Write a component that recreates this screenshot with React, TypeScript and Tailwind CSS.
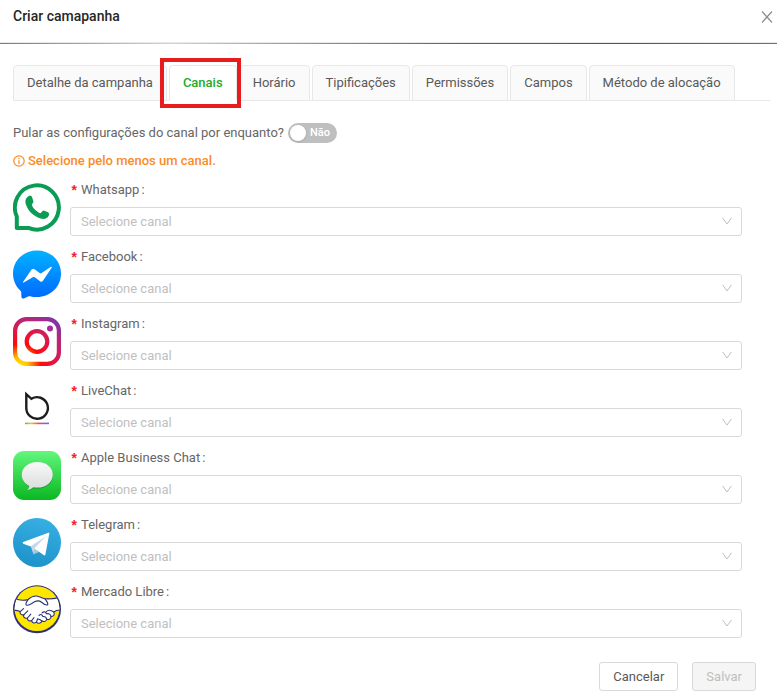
import React, { useState } from 'react';
import clsx from 'clsx';

const tabs = [
  'Detalhe da campanha',
  'Canais',
  'Horário',
  'Tipificações',
  'Permissões',
  'Campos',
  'Método de alocação',
];

const WhatsappIcon = () => (
  <svg viewBox="0 0 48 49" className="w-12 h-[49px]" aria-hidden="true">
    <path
      d="M3.8 44.9V33.5A22 22.1 0 1 1 15.5 44.9Z"
      fill="none"
      stroke="#0a9c55"
      strokeWidth="4"
      strokeLinejoin="round"
    />
    <path
      d="M15.5 13.2C17 12.6 18.6 12.8 19 14L20.4 18.3C20.8 19.6 19.2 20.8 18.8 21.8C19.6 24.8 23.8 29.2 27.4 30.2C28.6 29.8 29.4 27.6 30.6 27.6L34.6 29C36.4 29.8 36.4 31.4 35.6 33C34 36 30.4 36.4 27.6 35.4C20 32.8 14.6 27.4 12.6 20.4C11.8 17.4 13 14.4 15.5 13.2Z"
      fill="#0a9c55"
    />
  </svg>
);

const MessengerIcon = () => (
  <svg viewBox="0 0 48 49" className="w-12 h-[49px]" aria-hidden="true">
    <defs>
      <linearGradient id="messenger" x1="0" y1="0" x2="0" y2="1">
        <stop offset="0" stopColor="#00b2ff" />
        <stop offset="1" stopColor="#0068ff" />
      </linearGradient>
    </defs>
    <path
      d="M24 .5C10.6.5 0 10.4 0 23.6c0 6.9 2.8 12.9 7.5 17.1.5.4.7 1 .7 1.6l.2 4.4c0 1.4 1.3 2.2 2.5 1.7l4.7-2.1c.5-.2.9-.2 1.3-.1 2.2.6 4.6.9 7.1.9 13.4 0 24-10 24-23.5S37.4.5 24 .5Z"
      fill="url(#messenger)"
    />
    <path
      d="M10 32L18.6 19.4Q20 18 21.6 19.2L26.6 23Q27.6 23.8 28.6 23L38 16.7Q39.4 16.4 38.6 17.8L30 30.8Q28.6 32.4 27 31.2L21.8 27.2Q20.8 26.6 19.8 27.2L10.6 32.6Q9.6 33 10 32Z"
      fill="#fff"
    />
  </svg>
);

const InstagramIcon = () => (
  <svg viewBox="0 0 48 49" className="w-12 h-[49px]" aria-hidden="true">
    <defs>
      <radialGradient id="instagram" gradientUnits="userSpaceOnUse" cx="7" cy="48" r="58">
        <stop offset="0" stopColor="#ffdd00" />
        <stop offset="0.13" stopColor="#ffc400" />
        <stop offset="0.36" stopColor="#ff0a0a" />
        <stop offset="0.5" stopColor="#f0102c" />
        <stop offset="0.75" stopColor="#c4226a" />
        <stop offset="1" stopColor="#7638b4" />
      </radialGradient>
    </defs>
    <g fill="none" stroke="url(#instagram)" strokeWidth="4.2">
      <rect x="2.1" y="2.1" width="43.8" height="44.8" rx="11.5" />
      <circle cx="24" cy="24.5" r="10.3" />
    </g>
    <circle cx="37" cy="11.5" r="3" fill="#a0309a" />
  </svg>
);

const LiveChatIcon = () => (
  <svg viewBox="0 0 48 49" className="w-12 h-[49px]" aria-hidden="true">
    <defs>
      <linearGradient id="livechat" x1="0" y1="0" x2="1" y2="0">
        <stop offset="0" stopColor="#5cc04a" />
        <stop offset="0.25" stopColor="#f3c13c" />
        <stop offset="0.55" stopColor="#ef5544" />
        <stop offset="0.8" stopColor="#9560c0" />
        <stop offset="1" stopColor="#4b78f0" />
      </linearGradient>
    </defs>
    <path
      d="M13.3 23.7V10.2L18.4 14.8A10.8 10.8 0 1 1 13.3 23.7Z"
      fill="none"
      stroke="#1d1d1d"
      strokeWidth="2.4"
    />
    <rect x="12" y="38.6" width="24" height="1.6" fill="url(#livechat)" />
  </svg>
);

const AppleChatIcon = () => (
  <svg viewBox="0 0 48 49" className="w-12 h-[49px]" aria-hidden="true">
    <defs>
      <linearGradient id="apple" x1="0" y1="0" x2="0" y2="1">
        <stop offset="0" stopColor="#62f77c" />
        <stop offset="1" stopColor="#0ab722" />
      </linearGradient>
      <linearGradient id="bubble" x1="0" y1="0" x2="0" y2="1">
        <stop offset="0" stopColor="#f9f9f9" />
        <stop offset="1" stopColor="#d9dcda" />
      </linearGradient>
    </defs>
    <rect width="48" height="49" rx="11" fill="url(#apple)" />
    <path
      d="M24.6 12C15.6 12 9.8 17.6 9.8 25c0 5 2.8 9 7 11.2-.2 1.3-.9 2.4-1.9 3.4 2.1-.1 4.200-.9 5.700-2.200 11.200 1.600 19.400-4.200 19.400-12.400C40 17.600 33.600 12 24.600 12Z"
      fill="#087d1c"
      opacity="0.45"
    />
    <path
      d="M24.3 11C15.4 11 8.8 16.6 8.8 23.7c0 4.8 3 9 7.500 11.200-.1 1.500-.8 2.900-1.800 4 2.300-.2 4.300-1.200 5.700-2.700 1.300.3 2.700.4 4.100.4 8.900 0 15.500-5.700 15.500-12.900S33.200 11 24.300 11Z"
      fill="url(#bubble)"
    />
  </svg>
);

const TelegramIcon = () => (
  <svg viewBox="0 0 48 49" className="w-12 h-[49px]" aria-hidden="true">
    <defs>
      <linearGradient id="telegram" x1="0.65" y1="0" x2="0.4" y2="1">
        <stop offset="0" stopColor="#38afe3" />
        <stop offset="1" stopColor="#1c92c9" />
      </linearGradient>
    </defs>
    <ellipse cx="24" cy="24.5" rx="24" ry="24.5" fill="url(#telegram)" />
    <path d="M17.8 28.6L20.3 35.8L25 31.5L33 17.5Z" fill="#c3d9ea" />
    <path d="M20 36.500L21.400 30.600L26.200 34Z" fill="#a6c6dc" />
    <path
      d="M9.8 24.8Q9.4 24.3 10.2 24L35.4 14.7Q36.6 14.4 36.3 15.7L32.4 36.6Q32 38.2 30.6 37.1L21.4 30.6L32.6 18.6L17.8 28.6L10.2 25.800Z"
      fill="#fff"
    />
  </svg>
);

const MercadoIcon = () => (
  <svg viewBox="0 0 48 49" className="w-12 h-[49px]" aria-hidden="true">
    <defs>
      <clipPath id="mercado">
        <circle cx="24" cy="23.7" r="22.4" />
      </clipPath>
    </defs>
    <circle cx="24" cy="24.3" r="24" fill="#2d3277" />
    <circle cx="24" cy="23.7" r="22.4" fill="#ffe600" />
    <g clipPath="url(#mercado)" stroke="#2d3277" strokeWidth="1.1" strokeLinecap="round" strokeLinejoin="round">
      <path
        d="M0 13C6 15.5 11 15.8 15.2 14.4C18 11.8 20 10.8 23.5 11C26.5 11.3 28.5 13.2 32 13.8C37 14.3 42 13.5 48 12.5V25C45 25 42.5 25.7 40.8 27C42 29.500 40.500 31.500 38 31.500C38 34 35.800 35 33.800 34.300C33 36.700 30.600 37 29 36C28 38.500 24.800 39 23.500 37C21 39 18.700 37.500 18.700 35.500C16.500 36.700 14 35.200 14.500 33C11.500 34 9.800 31.500 11 29.700C8.500 30.500 6.500 28.500 7.200 26.600C5 25.600 3 25.200 0 25Z"
        fill="#fff"
      />
      <path
        d="M15.2 14.4C13.4 17 12 19.500 13.500 20.200C16 21 19 18.200 21.500 16.800C24 15.600 26.500 15.500 28.200 17C30.200 18.800 32 20.400 34.600 19.900C35.500 18.500 34.200 16.500 32 13.800M7.200 26.600L10.500 23.600M11 29.700L14.800 25.800M14.500 33L17.800 29.200M18.700 35.500L21 32.600M23.500 37L24.600 33.800M24.600 33.800C26.300 34.300 27.600 34.800 29 36M26 30.500C27.500 28.500 29.500 30 29.800 31.500M29 27.800C31 26 33 27 33.400 28.800M33.200 26.600C35 24.800 37.800 24.800 40.800 27M29.800 31.500C31.800 31.200 33.300 32.500 33.800 34.300M33.400 28.800C36 28 37.500 29.500 38 31.500"
        fill="none"
      />
    </g>
  </svg>
);

const channels = [
  { id: 'whatsapp', name: 'Whatsapp', Icon: WhatsappIcon },
  { id: 'facebook', name: 'Facebook', Icon: MessengerIcon },
  { id: 'instagram', name: 'Instagram', Icon: InstagramIcon },
  { id: 'livechat', name: 'LiveChat', Icon: LiveChatIcon },
  { id: 'apple', name: 'Apple Business Chat', Icon: AppleChatIcon },
  { id: 'telegram', name: 'Telegram', Icon: TelegramIcon },
  { id: 'mercado', name: 'Mercado Libre', Icon: MercadoIcon },
];

function ChannelField({ id, name, Icon }: (typeof channels)[number]) {
  return (
    <div className="flex gap-[9px]">
      <div className="pt-px shrink-0">
        <Icon />
      </div>
      <div className="flex-1">
        <label htmlFor={id} className="flex items-center h-4 text-[13px] leading-4 text-[#666]">
          <span className="w-[11px] pt-1 font-['Liberation_Mono',monospace] text-[14px] leading-3 font-bold text-[#f5222d]">
            *
          </span>
          {name}
          <span className="ml-[2px]">:</span>
        </label>
        <div className="relative mt-[9px]">
          <select
            id={id}
            required
            defaultValue=""
            className="block w-full h-[29px] appearance-none rounded-[3px] border border-[#d9d9d9] bg-white px-[10px] text-[13px] text-[#bfbfbf]"
          >
            <option value="">Selecione canal</option>
          </select>
          <svg
            viewBox="0 0 10 8"
            className="pointer-events-none absolute right-[10px] top-[10px] w-[10px] h-2"
            fill="none"
            stroke="#bfbfbf"
            aria-hidden="true"
          >
            <path d="M.5.8L5 7L9.5.8" />
          </svg>
        </div>
      </div>
    </div>
  );
}

export default function App() {
  const [activeTab, setActiveTab] = useState('Canais');
  const [skip, setSkip] = useState(false);

  return (
    <div className="bg-white font-[Roboto,sans-serif] text-[13px] text-[#666]">
      <header className="flex items-start justify-between h-[43px] border-b border-[#e8e8e8] pl-[13px] pr-1 pt-[6px]">
        <h1 className="text-[14px] leading-5 font-medium text-[#262626]">Criar camapanha</h1>
        <button type="button" aria-label="Fechar" className="mt-[5px]">
          <svg viewBox="0 0 12 12" className="w-3 h-3" fill="none" stroke="#8c8c8c" strokeWidth="1.2">
            <path d="M1 .5L11 11.5M11 .5L1 11.5" />
          </svg>
        </button>
      </header>
      <div className="h-px bg-[linear-gradient(90deg,#3aaa35_0%,#ffe11a_22%,#f08a24_37%,#e8262a_60%,#7b2fb0_80%,#3b78d8_100%)]" />

      <nav className="flex gap-[2px] ml-[13px] mr-[7px] mt-[21px] border-b border-[#e8e8e8]">
        {tabs.map((tab) => (
          <button
            key={tab}
            type="button"
            onClick={() => setActiveTab(tab)}
            className={clsx(
              'relative -mb-px h-9 rounded-t-[4px] border px-[13px] whitespace-nowrap',
              tab === activeTab
                ? 'border-[#e8e8e8] border-b-white bg-white font-medium text-[#22ac26]'
                : 'border-[#e8e8e8] bg-[#fafafa] text-[#595959]'
            )}
          >
            {tab}
            {tab === 'Canais' && (
              <span className="pointer-events-none absolute z-10 -left-[10px] -right-[5px] -top-2 -bottom-2 border-4 border-[#e71d1d]" />
            )}
          </button>
        ))}
      </nav>

      <form onSubmit={(e) => e.preventDefault()} className="pl-[13px]">
        <label className="flex items-center gap-1 mt-[22px] h-5">
          Pular as configurações do canal por enquanto?
          <span className="relative flex items-center w-[49px] h-5 rounded-full bg-[#bfbfbf] px-[2px] text-white">
            <input
              type="checkbox"
              role="switch"
              checked={skip}
              onChange={(e) => setSkip(e.target.checked)}
              className="absolute inset-0 appearance-none"
            />
            <span className="w-4 h-4 rounded-full bg-white shadow-sm" />
            <span className="ml-1 text-[11px] leading-4 font-medium">{skip ? 'Sim' : 'Não'}</span>
          </span>
        </label>

        <p className="flex items-center gap-[3px] mt-2 h-5 font-medium text-[#fa8c26]">
          <svg viewBox="0 0 12 12" className="w-3 h-3" fill="none" stroke="currentColor" strokeWidth="1.2" aria-hidden="true">
            <circle cx="6" cy="6" r="5.2" />
            <path d="M6 5.2V9M6 3V4.2" />
          </svg>
          Selecione pelo menos um canal.
        </p>

        <div className="flex flex-col gap-[13px] mt-[11px] pr-[35px]">
          {channels.map((channel) => (
            <ChannelField key={channel.id} {...channel} />
          ))}
        </div>

        <div className="flex justify-end gap-[14px] mt-6 pr-[21px] pb-[7px]">
          <button type="button" className="h-[29px] rounded-[3px] border border-[#d9d9d9] px-[13px] text-[#595959]">
            Cancelar
          </button>
          <button
            type="submit"
            disabled
            className="h-[29px] rounded-[3px] border border-[#d9d9d9] bg-[#f5f5f5] px-[13px] text-[#bfbfbf]"
          >
            Salvar
          </button>
        </div>
      </form>
    </div>
  );
}
